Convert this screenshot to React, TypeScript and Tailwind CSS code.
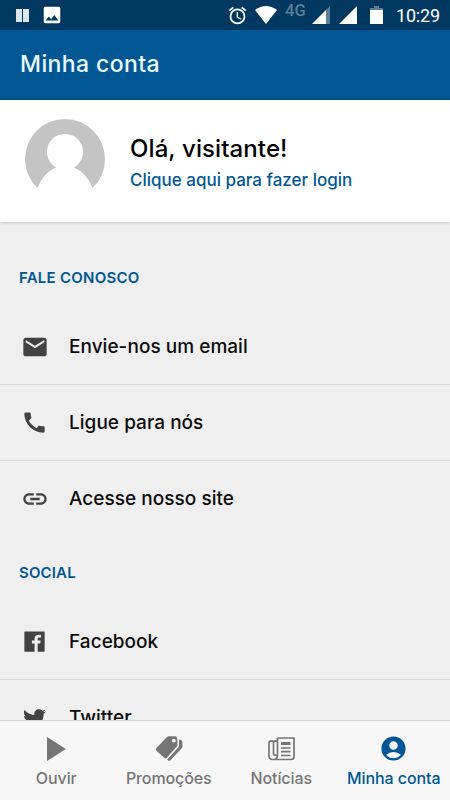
import type { ReactNode } from "react";
import { FaTwitter } from "react-icons/fa";
import { MdAccountCircle, MdCall, MdEmail, MdImage, MdLink } from "react-icons/md";

type RowProps = {
  icon: ReactNode;
  label: string;
  last?: boolean;
};

type TabProps = {
  icon: ReactNode;
  label: string;
  active?: boolean;
};

function StatusBar() {
  return (
    <div className="flex h-[30px] shrink-0 items-center bg-[#003861] text-white">
      <div className="ml-4 flex gap-px">
        <span className="h-[13px] w-[6px] bg-[#dce6ee]" />
        <span className="h-[13px] w-[6px] bg-[#dce6ee]" />
      </div>
      <MdImage className="ml-[12px] size-[22px]" />
      <svg className="ml-auto size-[21px]" viewBox="0 0 24 24" fill="currentColor">
        <path d="M22 5.7l-4.6-3.9-1.3 1.5 4.6 3.9L22 5.7zM7.9 3.4L6.6 1.9 2 5.7l1.3 1.5 4.6-3.8zM12.5 8H11v6l4.8 2.9.7-1.2-4-2.4V8zM12 4a9 9 0 1 0 0 18 9 9 0 0 0 0-18zm0 16a7 7 0 1 1 0-14 7 7 0 0 1 0 14z" />
      </svg>
      <svg className="ml-[7px] h-[18px] w-[22px]" viewBox="0 0 22 18" fill="currentColor">
        <path d="M11 18L0 4Q11-4 22 4z" />
      </svg>
      <span className="ml-[8px] w-[22px] self-start pt-[3px] font-[Roboto] text-[16.5px] leading-none font-medium text-[#5b7e98]">
        4G
      </span>
      <svg className="ml-[5px] h-[18px] w-[18px]" viewBox="0 0 18 18">
        <path d="M18 0v18H0z" fill="#5b7e98" />
        <path d="M14 4v14H0z" fill="#fff" />
      </svg>
      <svg className="ml-[9px] h-[18px] w-[18px]" viewBox="0 0 18 18">
        <path d="M18 0v18H0z" fill="#fff" />
      </svg>
      <svg className="ml-[13px] h-[18px] w-[13px]" viewBox="0 0 13 18">
        <path d="M4 0h5v2h4v3H0V2h4z" fill="#5b7e98" />
        <path d="M0 4h13v14H0z" fill="#fff" />
      </svg>
      <span className="mr-[10px] ml-[13px] w-[44px] pt-px font-[Roboto] text-[18px] leading-none tracking-[-0.2px] whitespace-nowrap">
        10:29
      </span>
    </div>
  );
}

function FacebookIcon() {
  return (
    <svg className="size-[27px]" viewBox="0 0 24 24" fill="currentColor">
      <path d="M3.4 3h17.2a.4.4 0 0 1 .4.4v17.2a.4.4 0 0 1-.4.4h-5.8v-7.2h2.3l.4-2.6h-2.7V9.7c0-.8.4-1.3 1.4-1.3h1.5V6h-2c-2.300 0-3.600 1.400-3.600 3.500v1.700H9.700v2.600h2.400V21H3.400a.4.4 0 0 1-.4-.4V3.400a.4.4 0 0 1 .4-.4z" />
    </svg>
  );
}

function PlayIcon() {
  return (
    <svg className="h-6 w-[19px]" viewBox="0 0 19 24" fill="currentColor">
      <path d="M0 0l19 12L0 24z" />
    </svg>
  );
}

function TagsIcon() {
  return (
    <svg className="h-[25px] w-[28px]" viewBox="0 0 28 25" fill="currentColor">
      <path
        d="M11.5 1.5Q12.7.3 14.3.3H20q2 0 2.2 2l.3 6.2q0 1.3-1 2.3L11.8 21.8q-1.3 1.3-2.6 0L1.4 14.7q-1.2-1.3 0-2.6zM18.8 2.7a1.9 1.9 0 1 0 0 3.8 1.9 1.9 0 0 0 0-3.8z"
        fillRule="evenodd"
      />
      <path d="M23.9 3.5l.2 6q0 1-.7 1.700L12.3 23.500l1.2 1.200q1 .4 1.700-.3L26.500 12.500q1-1 1-2.200L27.300 6q-.2-2.200-3.400-2.500z" />
    </svg>
  );
}

function NewsIcon() {
  return (
    <svg
      className="h-6 w-[27px]"
      viewBox="0 0 27 24"
      fill="none"
      stroke="currentColor"
      strokeWidth="1.7"
    >
      <path d="M9.5 1H26v18.5q0 3-3 3H4.500q-3.500 0-3.500-3.500V5.500q0-1.300 1.300-1.300h7.200M9.500 1v17q0 4-3.500 4.500M5.500 4.200v12.500q0 1.500 1.500 1.500h2" />
      <path d="M13 6.500h9.500" strokeWidth="3" />
      <path d="M13 11h9.500M13 14.700h9.500M13 18.500h9.500" />
    </svg>
  );
}

function Row({ icon, label, last }: RowProps) {
  return (
    <li
      className={`flex h-[76px] shrink-0 items-center ${last ? "" : "border-b border-[#dadada]"}`}
    >
      <span className="flex w-[69px] justify-center text-[#424242]">{icon}</span>
      <span className="pt-px text-[19px] font-medium tracking-[0.03px] whitespace-nowrap text-[#0b0b0b]">
        {label}
      </span>
    </li>
  );
}

function Tab({ icon, label, active }: TabProps) {
  return (
    <button
      className={`flex w-1/4 flex-col items-center pt-[14px] ${active ? "text-[#005793]" : "text-[#757575]"}`}
    >
      <span className="flex h-[27px] items-center">{icon}</span>
      <span className="mt-1 text-[16px] leading-6 font-medium tracking-[-0.1px] whitespace-nowrap">
        {label}
      </span>
    </button>
  );
}

export default function App() {
  return (
    <div className="flex h-[800px] w-[450px] flex-col overflow-hidden bg-[#efefef] font-[Inter,sans-serif]">
      <StatusBar />
      <header className="flex h-[70px] shrink-0 items-center border-b border-[#004577] bg-[#005793] px-5">
        <h1 className="text-[23px] font-medium tracking-[0.4px] text-[#e9f8ff]">Minha conta</h1>
      </header>

      <section className="flex h-[122px] shrink-0 bg-white pt-[19px] pl-[25px] shadow-[0_1px_3px_rgba(0,0,0,0.18)]">
        <svg className="size-20" viewBox="0 0 80 80">
          <path
            d="M12.5 69.050A40 40 0 1 1 67.500 69.050Q62 54 49 48.500A18 18 0 1 0 31 48.500Q18 54 12.500 69.050z"
            fill="#c4c4c4"
          />
        </svg>
        <div className="ml-[25px] pt-[13px]">
          <p className="text-[24px] leading-[34px] font-medium tracking-[0.1px] text-black">
            Olá, visitante!
          </p>
          <a className="block text-[17px] leading-7 font-medium text-[#005793]">
            Clique aqui para fazer login
          </a>
        </div>
      </section>

      <main className="flex min-h-0 flex-1 flex-col overflow-hidden">
        <h2 className="h-[87px] shrink-0 pt-[44px] pl-[19px] text-[15px] leading-6 font-semibold tracking-[0.25px] text-[#005793]">
          FALE CONOSCO
        </h2>
        <ul className="shrink-0">
          <Row icon={<MdEmail className="size-[28px]" />} label="Envie-nos um email" />
          <Row icon={<MdCall className="size-[27px]" />} label="Ligue para nós" />
          <Row icon={<MdLink className="size-[28px]" />} label="Acesse nosso site" last />
        </ul>
        <h2 className="h-[67px] shrink-0 pt-[24px] pl-[19px] text-[15px] leading-6 font-semibold tracking-[0.15px] text-[#005793]">
          SOCIAL
        </h2>
        <ul className="shrink-0">
          <Row icon={<FacebookIcon />} label="Facebook" />
          <Row icon={<FaTwitter className="size-[23px]" />} label="Twitter" last />
        </ul>
      </main>

      <nav className="flex h-20 shrink-0 border-t border-[#d2d2d2] bg-[#f7f7f7]">
        <Tab icon={<PlayIcon />} label="Ouvir" />
        <Tab icon={<TagsIcon />} label="Promoções" />
        <Tab icon={<NewsIcon />} label="Notícias" />
        <Tab icon={<MdAccountCircle className="size-[29px]" />} label="Minha conta" active />
      </nav>
    </div>
  );
}
